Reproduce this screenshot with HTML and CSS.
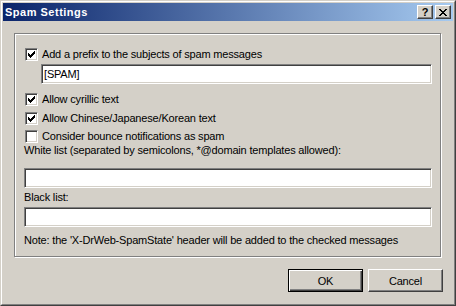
FILE: index.html
```html
<!DOCTYPE html>
<html lang="en">
<head>
<meta charset="utf-8"/>
<title>Spam Settings</title>
<link rel="stylesheet" href="styles.css">
</head>
<body>
<div class="window">
<div class="frame">
<!-- Заголовок окна -->
<div class="titlebar">
<span class="title">Spam Settings</span>
<div class="caption-btns">
<span class="cap-btn help">?</span>
<span class="cap-btn">
<svg width="8" height="7" viewBox="0 0 8 7" shape-rendering="crispEdges"><path fill="#000" d="M0 0h2v1H0z M6 0h2v1H6z M1 1h2v1H1z M5 1h2v1H5z M2 2h4v1H2z M3 3h2v1H3z M2 4h4v1H2z M1 5h2v1H1z M5 5h2v1H5z M0 6h2v1H0z M6 6h2v1H6z"/></svg>
</span>
</div>
</div>
<!-- Содержимое -->
<div class="client">
<div class="group">
<div class="check-row r1"><span class="checkbox"><svg class="tick" width="7" height="7" viewBox="0 0 7 7" shape-rendering="crispEdges"><path d="M6 0h1v1H6z M5 1h2v1H5z M0 2h1v1H0z M4 2h3v1H4z M0 3h2v1H0z M3 3h3v1H3z M0 4h5v1H0z M1 5h3v1H1z M2 6h1v1H2z"/></svg></span><span class="check-text">Add a prefix to the subjects of spam messages</span></div>
<div class="field prefix">[SPAM]</div>
<div class="check-row r2"><span class="checkbox"><svg class="tick" width="7" height="7" viewBox="0 0 7 7" shape-rendering="crispEdges"><path d="M6 0h1v1H6z M5 1h2v1H5z M0 2h1v1H0z M4 2h3v1H4z M0 3h2v1H0z M3 3h3v1H3z M0 4h5v1H0z M1 5h3v1H1z M2 6h1v1H2z"/></svg></span><span class="check-text">Allow cyrillic text</span></div>
<div class="check-row r3"><span class="checkbox"><svg class="tick" width="7" height="7" viewBox="0 0 7 7" shape-rendering="crispEdges"><path d="M6 0h1v1H6z M5 1h2v1H5z M0 2h1v1H0z M4 2h3v1H4z M0 3h2v1H0z M3 3h3v1H3z M0 4h5v1H0z M1 5h3v1H1z M2 6h1v1H2z"/></svg></span><span class="check-text">Allow Chinese/Japanese/Korean text</span></div>
<div class="check-row r4"><span class="checkbox"></span><span class="check-text">Consider bounce notifications as spam</span></div>
<div class="label white-label">White list (separated by semicolons, *@domain templates allowed):</div>
<div class="field white-field"></div>
<div class="label black-label">Black list:</div>
<div class="field black-field"></div>
<div class="note">Note: the 'X-DrWeb-SpamState' header will be added to the checked messages</div>
</div>
<div class="buttons">
<span class="btn default">OK</span>
<span class="btn">Cancel</span>
</div>
</div>
</div>
</div>
</body>
</html>
```
FILE: styles.css
```css
body {
    margin: 0;
    background: #d4d0c8;
    font-family: 'Liberation Sans', Arial, sans-serif;
    font-size: 11px;
    letter-spacing: -0.18px;
    color: #000;
}

.window {
    width: 456px;
    height: 306px;
    box-sizing: border-box;
    border: 1px solid;
    border-color: #d4d0c8 #404040 #404040 #d4d0c8;
    background: #d4d0c8;
}

.frame {
    height: 100%;
    box-sizing: border-box;
    border: 1px solid;
    border-color: #fff #808080 #808080 #fff;
    padding: 1px;
}

/* Заголовок */
.titlebar {
    height: 18px;
    display: flex;
    align-items: center;
    justify-content: space-between;
    background: linear-gradient(to right, #0a246a, #a6caf0);
}

.title {
    color: #fff;
    font-weight: bold;
    letter-spacing: 0.5px;
    padding-left: 2px;
    line-height: 18px;
}

.caption-btns {
    display: flex;
    gap: 2px;
    margin-right: 2px;
}

.cap-btn {
    width: 16px;
    height: 14px;
    box-sizing: border-box;
    border: 1px solid;
    border-color: #fff #404040 #404040 #fff;
    box-shadow: inset -1px -1px #808080;
    background: #d4d0c8;
    display: flex;
    align-items: center;
    justify-content: center;
}

.cap-btn.help {
    font-weight: bold;
    font-size: 11px;
    letter-spacing: 0;
    line-height: 12px;
}

/* Клиентская область */
.client {
    padding: 12px 10px 0 11px;
}

.group {
    height: 224px;
    margin-right: 2px;
    box-sizing: border-box;
    border: 1px solid #808080;
    box-shadow: 1px 1px 0 #fff, inset 1px 1px 0 #fff;
    padding: 14px 8px 0 9px;
}

.check-row {
    display: flex;
    align-items: center;
    height: 13px;
    margin-left: 1px;
}

.r2 { margin-top: 9px; }
.r3 { margin-top: 6px; }
.r4 { margin-top: 5px; }

.checkbox {
    width: 13px;
    height: 13px;
    box-sizing: border-box;
    border: 1px solid;
    border-color: #808080 #fff #fff #808080;
    box-shadow: inset 1px 1px #404040, inset -1px -1px #d4d0c8;
    background: #fff;
    display: flex;
    align-items: center;
    justify-content: center;
    flex-shrink: 0;
}

.check-text {
    margin-left: 4px;
    line-height: 13px;
    margin-top: -1px;
}

.field {
    height: 20px;
    box-sizing: border-box;
    border: 1px solid;
    border-color: #808080 #fff #fff #808080;
    box-shadow: inset 1px 1px #404040, inset -1px -1px #d4d0c8;
    background: #fff;
    padding: 0 2px;
    line-height: 18px;
}

.prefix {
    margin-top: 3px;
    margin-left: 17px;
}

.label {
    line-height: 13px;
}

.white-label { margin-top: 1px; }
.white-field { margin-top: 11px; }
.black-label { margin-top: 3px; }
.black-field { margin-top: 3px; }

.note {
    margin-top: 7px;
    line-height: 13px;
}

/* Кнопки */
.buttons {
    display: flex;
    justify-content: flex-end;
    gap: 5px;
    margin-top: 12px;
}

.btn {
    width: 75px;
    height: 23px;
    box-sizing: border-box;
    border: 1px solid;
    border-color: #fff #404040 #404040 #fff;
    box-shadow: inset -1px -1px #808080;
    display: flex;
    align-items: center;
    justify-content: center;
}

.btn.default {
    border-color: #000;
    box-shadow: inset 1px 1px #fff, inset -1px -1px #404040, inset -2px -2px #808080;
}
```
